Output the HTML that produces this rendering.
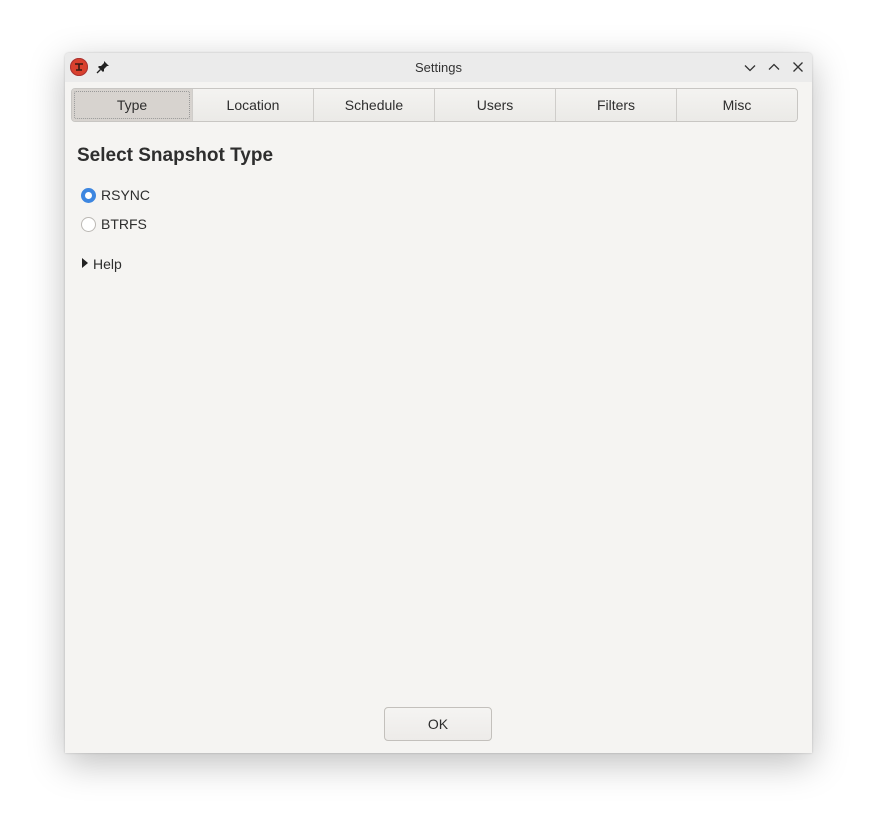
<!DOCTYPE html>
<html><head><meta charset="utf-8"><style>
html,body{margin:0;padding:0;width:877px;height:830px;background:#fff;overflow:hidden;font-family:"Liberation Sans",sans-serif;}
.win{position:absolute;left:65px;top:53px;width:747px;height:700px;background:#f5f4f2;box-shadow:0 10px 36px rgba(0,0,0,0.26),0 0 2px rgba(0,0,0,0.2);border-radius:4px 4px 0 0;}
.title{position:absolute;left:0;top:0;width:747px;height:29px;background:#ebebeb;border-radius:4px 4px 0 0;}
.title .t{position:absolute;left:0;right:0;top:7px;text-align:center;font-size:13px;color:#333;}
.app{position:absolute;left:5px;top:5px;width:18px;height:18px;border-radius:50%;background:#d9412e;box-shadow:inset 0 0 0 1px #a33;}
.tabs{position:absolute;left:6px;top:35px;width:725px;height:32px;border:1px solid #c8c6c3;border-radius:4px;background:#efeeec;display:flex;overflow:hidden;}
.tab{flex:1;border-left:1px solid #cfcdca;text-align:center;font-size:14px;color:#2e2e2e;line-height:32px;background:linear-gradient(#f4f3f1,#ebeae7);}
.tab:first-child{border-left:none;background:#d7d3cf;position:relative;}
.tab:first-child:after{content:"";position:absolute;left:2px;top:2px;right:2px;bottom:2px;border:1px dotted #999;border-radius:2px;}
h1{position:absolute;left:12px;top:92px;margin:0;font-size:19px;font-weight:bold;color:#2e2e2e;}
.r{position:absolute;left:16px;border-radius:50%;box-sizing:border-box;}
.lbl{position:absolute;left:36px;font-size:14px;color:#2e2e2e;}
.ok{position:absolute;left:319px;top:654px;width:106px;height:32px;border:1px solid #c3c0bc;border-radius:4px;background:linear-gradient(#f5f4f2,#edebe9);text-align:center;line-height:32px;font-size:14px;color:#2e2e2e;}
</style></head><body>
<div class="win">
 <div class="title">
  <div class="app"><svg width="18" height="18" viewBox="0 0 18 18"><path d="M5 6h8M9 6v6M6 12h6" stroke="#3a1a14" stroke-width="1.6" fill="none"/></svg></div>
  <svg style="position:absolute;left:31px;top:7px" width="14" height="14" viewBox="0 0 14 14"><path d="M8 1l5 5-2 0-3 3 0 2-1 1-5-5 1-1 2 0 3-3z" fill="#222"/><path d="M4.5 9.5L1 13" stroke="#222" stroke-width="1.3"/></svg>
  <div class="t">Settings</div>
  <svg style="position:absolute;left:678px;top:8px" width="14" height="14" viewBox="0 0 14 14"><path d="M2 4.5l5 5 5-5" stroke="#333" stroke-width="1.3" fill="none"/></svg>
  <svg style="position:absolute;left:702px;top:7px" width="14" height="14" viewBox="0 0 14 14"><path d="M2 9.5l5-5 5 5" stroke="#333" stroke-width="1.3" fill="none"/></svg>
  <svg style="position:absolute;left:726px;top:7px" width="14" height="14" viewBox="0 0 14 14"><path d="M2.5 2.5l9 9M11.5 2.5l-9 9" stroke="#333" stroke-width="1.3" fill="none"/></svg>
 </div>
 <div class="tabs"><div class="tab">Type</div><div class="tab">Location</div><div class="tab">Schedule</div><div class="tab">Users</div><div class="tab">Filters</div><div class="tab">Misc</div></div>
 <h1>Select Snapshot Type</h1>
 <div class="r" style="top:135px;width:15px;height:15px;border:4px solid #3d86e0;background:#fff"></div>
 <div class="lbl" style="top:134px">RSYNC</div>
 <div class="r" style="top:164px;width:15px;height:15px;border:1px solid #bbb8b4;background:#fff"></div>
 <div class="lbl" style="top:163px">BTRFS</div>
 <svg style="position:absolute;left:16px;top:204px" width="8" height="12" viewBox="0 0 8 12"><path d="M1 1l6 5-6 5z" fill="#222"/></svg>
 <div class="lbl" style="left:28px;top:203px">Help</div>
 <div class="ok">OK</div>
</div>
</body></html>
